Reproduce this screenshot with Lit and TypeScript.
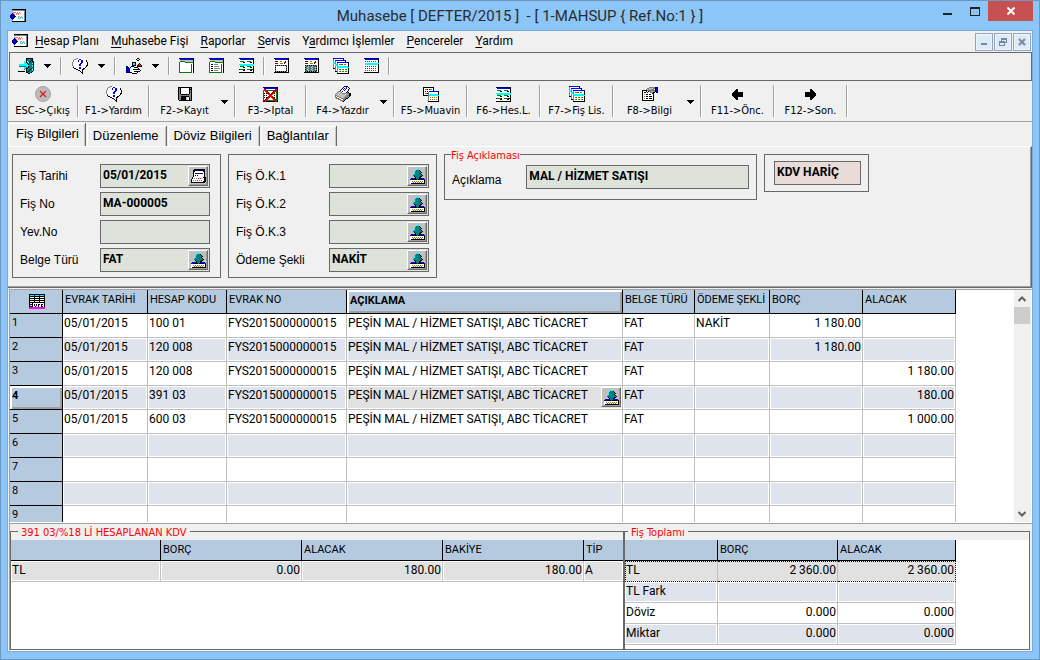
import { LitElement, html, svg, css, nothing } from "lit";
import { customElement, property } from "lit/decorators.js";
import { classMap } from "lit/directives/class-map.js";

/* Pixel icons: one character per pixel, looked up in this palette. */
const PALETTE: Record<string, string> = {
  k: "#000000", w: "#ffffff", b: "#0000ff", n: "#000080", c: "#00ffff",
  t: "#008080", g: "#808080", s: "#c0c0c0", r: "#ff0000", d: "#800000",
  G: "#008000", y: "#ffff00", o: "#808000", m: "#ff00ff", a: "#5fd0c8", p: "#ff7070",
};

const ICONS: Record<string, string[]> = {
  app: [
    "..kkkkkkkkkkkkkk",
    "..gggggggggggggk",
    "..swwwwwwwwwwwgk",
    "..spppwpwpwwwwgk",
    "..npwwpppwpwwwgk",
    ".nnnpwpwpwwwwwgk",
    "nnbnnwwwwwwwwwgk",
    "nbbbnnwwaawawwgk",
    "nnbnnwwwawaaawgk",
    ".nnnwwwwaaawawgk",
    "..nwwwwwwwwwwwgk",
    "..swwwwwwwwwwwgk",
    "..kkkkkkkkkkkkkk",
  ],
  exit: [
    "........kkkkkkk.",
    "........ktttttk.",
    "........kttttkk.",
    "......c.kwttktkk",
    "......ccktwktttk",
    "......ccckttttck",
    ".ccccccccckttttk",
    ".cccccccccctttck",
    ".tttttttccktttck",
    "......ccttkttttk",
    "......ctkktttkck",
    "......t.ktttktck",
    "........kttkttck",
    "kkkkkkk.ktktttk.",
    "........kktttk..",
    "..........kk....",
  ],
  help: [
    "....ggwwwwww....",
    "..ggwwwbbwwwww..",
    ".gwwwwbwwbbwwwk.",
    ".gwwwwbwwbbwwwk.",
    "gwwwwwwwwbbwwwwk",
    "gwwwwwwwbbwwwwwk",
    "gwwwwwwbbwwwwwwk",
    "gwwwwwwbbwwwwwkk",
    ".gwwwwwwwwwwwwk.",
    ".kwwwwwbbwwwwk..",
    "..kkwwwbbwwkk...",
    "....kkwwwwkk....",
    "......kkwwk.....",
    "........kwk.....",
    ".........kk.....",
    "..........k.....",
  ],
  hand: [
    "...........kk...",
    "..........kyyk..",
    "...........kk...",
    "................",
    "......kkkk......",
    "......kcck...k..",
    "......kcck..krk.",
    "......kkkk.krrrk",
    "nn...kkk...kkkkk",
    "nbn.kwwwkkkk....",
    "nnbkwwwwwwwwk...",
    "nnbkwwwkkkkkkk..",
    "nnbkwwwwwwwwwwk.",
    "nnbkwwwwkkkkkk..",
    "nnnkkkwwwwwk....",
    "......kkkkk.....",
  ],
  window: [
    ".nnnnnnnnnnnnnnk",
    "..bbbbbbbbbbbbbk",
    "..sssssssssssssk",
    "..GGGGGssssssssk",
    ".GwwwwwGGGGGGGGk",
    ".Gwwwwwwwwwwwwwk",
    ".GwwwwwwwwwwwGwk",
    ".GwwwwwwwwwwwGwk",
    ".GwwwwwwwwwwwGwk",
    ".GwwwwwwwwwwwGwk",
    ".GwwwwwwwwwwwGwk",
    ".GwwwwwwwwwwwGwk",
    ".GwwwwwwwwwwwGwk",
    ".GwwwwwwwwwwwGwk",
    ".GGGGGGGGGGGGGwk",
  ],
  list: [
    ".nnnnnnnnnnnnnnk",
    "..bbbbbbbbbbbbbk",
    "..sssssssssssssk",
    "..GGGGGssssssssk",
    ".GwwwwwGGGGGGGGk",
    ".Gwwwwwwwwwwwwwk",
    ".GwkkwggggwwwGwk",
    ".GwwwwwwwwwwwGwk",
    ".GwkkwgggggwwGwk",
    ".GwwwwwwwwwwwGwk",
    ".GwkkwggggggwGwk",
    ".GwwwwwwwwwwwGwk",
    ".GwkkwggggwwwGwk",
    ".GwwwwwwwwwwwGwk",
    ".GGGGGGGGGGGGGwk",
  ],
  cells: [
    "nnnnnnnnnnnnnnk",
    "wbbbbbbbbbbbbbk",
    "wwwwwwwwwwwwwwk",
    "wGGGGwwwGGGGwwk",
    "wwwwkkwwwwwkkwk",
    "wwwwwwwwwwwwwwk",
    "ccccccccccccccc",
    "wcccccccccccccc",
    "wGGGGwwwGGGGwwk",
    "wwwwkkwwwwwkkwk",
    "wwwwwwwwwwwwwwk",
    "kGGGGkwwGGGGkkk",
    "wwwwkkwwwwwkkwk",
    "wwwwwwwwwwwwwwk",
    "kkkkkkkkkkkkkkk",
  ],
  form: [
    "nnnnnnnnnnnnnnk",
    "wbbbbbbbbbbbbbk",
    "wwwwwwwwwwwwwwk",
    "wdddwwoowwwdwwk",
    "wwwwwwwwwwddwwk",
    "wdddwwooowdwwwk",
    "wwwwwwwwwwwwwwk",
    "wkgkgkgkgkgkgwk",
    "wgwwwwwwwwwwkwk",
    "wkwwwwwwwwwwgwk",
    "wgwwwwwwwwwwkwk",
    "wkwwwwwwwwwwgwk",
    "wgwwwwwwwwwwkwk",
    "wkgkgkgkgkgkgwk",
    "kkkkkkkkkkkkkkk",
  ],
  formGrid: [
    "nnnnnnnnnnnnnnk",
    "wbbbbbbbbbbbbbk",
    "wwwwwwwwwwwwwwk",
    "wdddwwoowwwdwwk",
    "wwwwwwwwwwddwwk",
    "wdddwwooowdwwwk",
    "wwwwwwwwwwwwwwk",
    "wkgkgkgkgkgkgwk",
    "wgtgsgtgsgtgkwk",
    "wkgsgtgsgtgsgwk",
    "wgtgsgtgsgtgkwk",
    "wkgsgtgsgtgsgwk",
    "wgtgsgtgsgtgkwk",
    "wkgkgkgkgkgkgwk",
    "kkkkkkkkkkkkkkk",
  ],
  stack: [
    "nbbbbbbbbbk.....",
    "gwwwwwwwwwk.....",
    "gwbbbbbbbbbbk...",
    "gwgwwwwwwwwwk...",
    "ccgwnbbbbbbbbbbk",
    "ccgwgwwwwwwwwwwk",
    "gwccgwooGGwoowwk",
    "gwccgwwwwwwwwwwk",
    "gwgwccccccccccck",
    "gwgwgccccccccccc",
    "kkgwgwwwwwwwwwwk",
    "..gwgwoGwoGwoGwk",
    "..gwgwwwwwwwwwwk",
    "..kkgwoGwoGwoGwk",
    "....gwwwwwwwwwwk",
    "....kkkkkkkkkkkk",
  ],
  calendar: [
    "nnnnnnnnnnnnnnk",
    "wbbbbbbbbbbbbbk",
    "wwwwwwwwwwwwwwk",
    "wGwGwGwGwGwGwwk",
    "wwwwwwwwwwwwwwk",
    "wcccccccccccccc",
    "wccccccccccccck",
    "wwwwwwwwwwwwwwk",
    "wGwGwGwGwGwGwwk",
    "wwwwwwwwwwwwwwk",
    "wGwGwGwGwGwGwwk",
    "wwwwwwwwwwwwwwk",
    "wGwGwGwGwGwGwwk",
    "wwwwwwwwwwwwwwk",
    "kkkkkkkkkkkkkkk",
  ],
  save: [
    "kkkkkkkkkkkkkk",
    "kgkwwwwwwwwkgk",
    "kgkwwwwwwwwkkk",
    "kgkwwwwwwwwkgk",
    "kgkwwwwwwwwkgk",
    "kgkwwwwwwwwkgk",
    "kgkwwwwwwwwkgk",
    "kggkkkkkkkkggk",
    "kggggggggggggk",
    "kggkkkkkkkkggk",
    "kggkkkkkswwkgk",
    "kggkkkkkswwkgk",
    "kggkkkkkswwkgk",
    ".kkkkkkkkkkkkk",
  ],
  cancel: [
    "nnnnnnnnnnnnnnk",
    "wbbbbbbbbbbbbbk",
    "wrdwwwwwwwwwdrk",
    "GrrdGGGGGGGdrrk",
    "GwrrdwwwwwdrrGk",
    "GwwrrdwwwdrrwGk",
    "GkwkrrdwdrrkwGk",
    "GwwwwrrdrrwwwGk",
    "GkwkwwrrrwwkwGk",
    "GwwwwdrrrdwwwGk",
    "GkwkdrrwrrdkwGk",
    "GwwdrrwwwrrdwGk",
    "GwdrrwwwwwrrdGk",
    "GdrrGGGGGGGrrGk",
    "kdrkkkkkkkkkrdk",
  ],
  print: [
    ".........kkkk...",
    "........kwwbwk..",
    ".......kwbwbwwk.",
    "......kwbwbwwk..",
    ".....kwwwbwwwk..",
    "...gggwbwwwwk...",
    "..gsssgwwwwkgk..",
    ".gsssssggggsggkk",
    "gsssssssssssggkk",
    "ggsssssssssgggkk",
    "gwggssssssggggk.",
    "gGwwggsssggggk..",
    ".ggrwwgggggkk...",
    "...gggwwggk.....",
    ".....ggggk......",
    ".......gk.......",
  ],
  linked: [
    "kkkkkkkkkkk.....",
    "kwwwwwwwwwk.....",
    "kwookwkoowk.....",
    "kwwwwwwwwwk.....",
    "kwkwkwnbbbbbbbbk",
    "kwwwwgwwwwwwwwwk",
    "kwookgwwwwwwwwwk",
    "kwwwwgccccccccck",
    "kkkkkgcccccccccc",
    ".....gwwwwwwwwwk",
    ".....gwowowowowk",
    ".....gwwwwwwwwwk",
    ".....gwowowowowk",
    ".....gwwwwwwwwwk",
    ".....kkkkkkkkkkk",
  ],
  props: [
    ".......ggggggknn",
    ".....ggssssggkbn",
    "....gsgsggggskbn",
    "kkkkkggggggggkbn",
    "kwwwkwkgggsggkbn",
    "kwkkwkwwgggkk.kn",
    "kwwwwwwwwwkk....",
    "kwgwkkwkkwwk....",
    "kwwwwwwwwwwk....",
    "kwgwkkwkkkwk....",
    "kwwwwwwwwwwk....",
    "kwgwkkwkkkwk....",
    "kwwwwwwwwwwk....",
    "kkkkkkkkkkkk....",
  ],
  prev: [
    "....kk.....",
    "...kkk.....",
    "..kkkk.....",
    ".kkkkkkkkkk",
    "kkkkkkkkkkk",
    "kkkkkkkkkkk",
    "kkkkkkkkkkk",
    ".kkkkkkkkkk",
    "..kkkk.....",
    "...kkk.....",
    "....kk.....",
  ],
  next: [
    ".....kk....",
    ".....kkk...",
    ".....kkkk..",
    "kkkkkkkkkk.",
    "kkkkkkkkkkk",
    "kkkkkkkkkkk",
    "kkkkkkkkkkk",
    "kkkkkkkkkk.",
    ".....kkkk..",
    ".....kkk...",
    ".....kk....",
  ],
  lookup: [
    "sssssscccssssss",
    "sssssctttksssss",
    "ssssstttttkssss",
    "sssscttttttksss",
    "ssssctttttkssss",
    "sssctttttttksss",
    "ssstttttttttkss",
    "ssssktttttkksss",
    "sssssktttkkssss",
    "sbbbbktttkbbbbs",
    "bbkkkkktkkkkkbk",
    "wwwwwwwwwwwwwwk",
    "wwowowowowowowk",
    "wwwowowowowowwk",
    "wkkkkkkkkkkkkkk",
  ],
  date: [
    "...kkkkkkkkkkk.",
    "..kkkkkkkkkkkk.",
    "..kkwwwwwwwwkk.",
    "..kwwwwwwwwwwk.",
    "..kwnnnnnnnnwk.",
    "..kwwwwwwwwwwk.",
    "..kwkwkwwwwwwk.",
    "..kwwwwwwwwwwk.",
    ".kwwwwwwwwwwkkk",
    ".kwgwgwrwrwwwkk",
    "kwwwwwwwwwwwwkk",
    "kwgwgwrwgwrwwkk",
    "kwwwwwwwwwwwkkk",
    "kkkkkkkkkkkkkk.",
  ],
  corner: [
    "kkkkkkkkkkkkkkkk",
    "kccccbccccbcccck",
    "kkkkkkkkkkkkkkkk",
    "kwwwwkwwwwkwwwwk",
    "kkkkkkkkkkkkkkkk",
    "kwwwwkwwwwkwwwwk",
    "kkkkkkkkkkkkkkkk",
    "kwwwwkwwwwkwwwwk",
    "kkkkkkkkkkkkkkkk",
    "kwwkwwwwwwwwwwwk",
    "kkkkwkwkwkkwkkwk",
    "kwwkwkwkwkwwkwwk",
    "kkkkwwkwwkwwkkwk",
    "mmmmmmmmmmmmmmmm",
    "mmmmmmmmmmmmmmmm",
  ],
};

@customElement("pixel-icon")
class PixelIcon extends LitElement {
  static styles = css`
    :host { display: block; line-height: 0; }
    svg { display: block; shape-rendering: crispEdges; }
  `;
  @property() name = "";

  render() {
    const rows = ICONS[this.name] ?? [];
    const w = Math.max(0, ...rows.map((r) => r.length));
    const runs: unknown[] = [];
    rows.forEach((row, y) => {
      for (let x = 0; x < row.length; ) {
        let end = x + 1;
        while (end < row.length && row[end] === row[x]) end++;
        if (row[x] !== ".") {
          runs.push(svg`<rect x=${x} y=${y} width=${end - x} height="1" fill=${PALETTE[row[x]]}></rect>`);
        }
        x = end;
      }
    });
    return html`<svg width=${w} height=${rows.length} viewBox="0 0 ${w} ${rows.length}" aria-hidden="true">${runs}</svg>`;
  }
}

const icon = (name: string) => html`<pixel-icon name=${name}></pixel-icon>`;
const arrow = html`<svg width="7" height="4" viewBox="0 0 7 4" aria-hidden="true"><path d="M0 0h7v1h-1v1h-1v1h-1v1h-1v-1h-1v-1h-1v-1h-1z"></path></svg>`;

/* [before, access key, after] */
const MENU: [string, string, string][] = [
  ["", "H", "esap Planı"], ["", "M", "uhasebe Fişi"], ["", "R", "aporlar"], ["", "S", "ervis"],
  ["Y", "a", "rdımcı İşlemler"], ["", "P", "encereler"], ["", "Y", "ardım"],
];

const COMMANDS: { icon: string; label: string; more?: boolean; narrow?: boolean }[] = [
  { icon: "stop", label: "ESC->Çıkış", narrow: true },
  { icon: "help", label: "F1->Yardım", narrow: true },
  { icon: "save", label: "F2->Kayıt", more: true, narrow: true },
  { icon: "cancel", label: "F3->Iptal", narrow: true },
  { icon: "print", label: "F4->Yazdır", more: true },
  { icon: "linked", label: "F5->Muavin" },
  { icon: "cells", label: "F6->Hes.L." },
  { icon: "stack", label: "F7->Fiş Lis." },
  { icon: "props", label: "F8->Bilgi", more: true },
  { icon: "prev", label: "F11->Önc." },
  { icon: "next", label: "F12->Son." },
];

const TABS = ["Fiş Bilgileri", "Düzenleme", "Döviz Bilgileri", "Bağlantılar"];

const COLUMNS = ["EVRAK TARİHİ", "HESAP KODU", "EVRAK NO", "AÇIKLAMA", "BELGE TÜRÜ", "ÖDEME ŞEKLİ", "BORÇ", "ALACAK"];
const NOTE = "PEŞİN MAL / HİZMET SATIŞI, ABC TİCACRET";
const line = (account: string, pay: string, debit: string, credit: string) =>
  ["05/01/2015", account, "FYS2015000000015", NOTE, "FAT", pay, debit, credit];
const LINES: string[][] = [
  line("100 01", "NAKİT", "1 180.00", ""),
  line("120 008", "", "1 180.00", ""),
  line("120 008", "", "", "1 180.00"),
  line("391 03", "", "", "180.00"),
  line("600 03", "", "", "1 000.00"),
  ...Array.from({ length: 4 }, () => Array(8).fill("")),
];
const CURRENT = 3;

const TOTALS = [
  ["TL", "2 360.00", "2 360.00"],
  ["TL Fark", "", ""],
  ["Döviz", "0.000", "0.000"],
  ["Miktar", "0.000", "0.000"],
];

@customElement("app-root")
class AppRoot extends LitElement {
  static styles = css`
    :host {
      display: block;
      color: #000;
      font: 12px/14px "Liberation Sans", Arial, sans-serif;
      --face: #f0f0f0;
      --dark: #696969;
      --mid: #a0a0a0;
      --head: #b5cade;
      --stripe: #dfe3ec;
      --field: #dde3da;
      --tahoma: "DejaVu Sans Condensed", "DejaVu Sans", sans-serif;
      --cell: Roboto, "Liberation Sans", sans-serif;
    }
    * { box-sizing: border-box; }
    button, input { font: inherit; color: inherit; margin: 0; padding: 0; border: 0; border-radius: 0; background: none; }
    button { cursor: default; }

    .window {
      display: flex; flex-direction: column; height: 100vh; min-height: 560px;
      padding: 0 6px 7px; border: 1px solid #6b98c1; background: #8cc6f9;
    }
    .title {
      flex: none; display: grid; grid-template-columns: 1fr auto 1fr; align-items: center; height: 29px;
      color: #2b2b2b;
    }
    .title pixel-icon { padding-left: 3px; }
    .title h1 { margin: 0; font: 15px/20px Roboto, "Open Sans", sans-serif; white-space: pre; }
    .caption { display: flex; justify-content: flex-end; align-self: start; }
    .caption button { display: grid; place-items: center; width: 27px; height: 20px; }
    .caption .close { width: 45px; background: #c75050; }
    .client {
      flex: 1; min-height: 0; display: flex; flex-direction: column;
      border: 1px solid #79a9d5; background: var(--face);
    }

    .menu { flex: none; display: flex; align-items: center; height: 21px; padding: 0 1px 0 4px; }
    .menu pixel-icon { padding-bottom: 2px; }
    .menu nav { display: flex; gap: 12px; margin-left: 7px; padding-bottom: 2px; }
    .menu a { color: inherit; text-decoration: none; font: 12px/18px Roboto, "Open Sans", sans-serif; white-space: nowrap; }
    .menu u { text-underline-offset: 2px; }
    .mdi { display: flex; gap: 1px; margin-left: auto; }
    .mdi button {
      display: grid; place-items: center; width: 18px; height: 18px;
      border: 1px solid #95a4b8; background: #dcebfa; box-shadow: inset 0 0 0 1px #eef6fd;
    }

    .tools {
      flex: none; display: flex; align-items: center; height: 29px; margin-left: 1px; padding: 0 0 2px 7px;
      border: 1px solid var(--dark);
    }
    .tools button { display: grid; place-items: center; width: 30px; height: 22px; }
    .tools .lead { width: 18px; }
    .tools .drop { width: 25px; }
    .sep { flex: none; width: 2px; height: 18px; border-left: 1px solid var(--mid); border-right: 1px solid #fff; }
    .tools .sep { margin-right: 9px; }
    .tools .tight { margin-right: 1px; }
    .tools button:not(.drop) + .sep { margin-left: 2px; }

    .commands { flex: none; display: flex; align-items: center; height: 41px; border-bottom: 1px solid var(--mid); }
    .commands .run { display: flex; flex-direction: column; align-items: center; width: 71px; height: 36px; gap: 1px; padding-top: 2px; }
    .commands .run.narrow { width: 69px; }
    .commands .glyph { display: grid; place-items: center; height: 18px; }
    .commands .run span:last-child { font: 11px/14px var(--tahoma); white-space: nowrap; }
    .commands .drop { width: 15px; height: 34px; padding: 0 4px 3px 0; }
    .commands .sep { height: 32px; }

    .tabs { flex: none; display: flex; align-items: flex-end; height: 24px; }
    .tabs button {
      height: 20px; padding: 0 7px 0 6px; font-size: 13px; line-height: 18px;
      border-right: 1px solid var(--dark); box-shadow: inset 1px 1px #fff, inset -1px 0 #c8c8c8;
    }
    .tabs button + button { margin-left: 1px; }
    .tabs .active { height: 23px; padding: 0 6px 2px 8px; }

    .sheet {
      flex: none; display: flex; align-items: flex-start; gap: 7px; height: 142px; padding: 7px 4px 0;
      border-top: 1px solid #fff; border-right: 1px solid var(--dark); border-bottom: 1px solid var(--dark);
      box-shadow: inset -1px -1px var(--mid);
    }
    .box { margin: 0; min-width: 0; border: 1px solid var(--dark); padding: 9px 10px 5px 7px; }
    .fields { display: grid; grid-template-columns: auto 1fr; align-items: center; row-gap: 4px; width: 209px; }
    .fields.second { padding-right: 7px; }
    .field { display: flex; justify-self: end; width: 110px; height: 24px; padding: 1px; border: 1px solid var(--dark); background: var(--field); }
    .second .field { width: 100px; }
    .field input { flex: 1; min-width: 0; padding: 0 0 2px 1px; font: bold 12px/18px var(--cell); }
    .key {
      flex: none; display: grid; place-items: center; width: 20px; height: 20px; background: #c0c0c0;
      border: 1px solid; border-color: #fff var(--dark) var(--dark) #fff; box-shadow: inset -1px -1px var(--mid);
    }
    legend { color: #f00; font: 11px/13px var(--tahoma); padding: 2px 0 0; }
    .note { display: flex; align-items: flex-end; gap: 25px; width: 313px; margin-top: -7px; padding: 3px 7px 10px; }
    .note legend { margin-left: -1px; }
    .note label { line-height: 18px; }
    .note .field { flex: 1; }
    .tax { padding: 6px 7px 6px 9px; }
    .tax .field { width: 87px; background: #e8dbd8; }

    .grid {
      flex: 1; min-height: 0; display: flex; margin: 1px 0 0 1px; background: #fff;
      border: 1px solid; border-color: var(--mid) #fff #fff var(--mid);
    }
    .rows { flex: 1; min-width: 0; overflow: hidden; }
    table { border-collapse: separate; border-spacing: 0; table-layout: fixed; font: 12px/18px var(--cell); }
    th, td { padding: 0 1px; text-align: left; vertical-align: top; white-space: nowrap; overflow: hidden; font-weight: normal; }
    th { background: var(--head); border: 0 solid #000; border-width: 0 1px 1px 0; padding-left: 2px; font-size: 11px; }
    td { border: 0 solid #c0c0c0; border-width: 0 1px 1px 0; height: 24px; }
    tr.even td { background: var(--stripe); box-shadow: inset 0 0 0 1px #fff; }
    .num { text-align: right; }
    .journal { width: 946px; }
    .journal thead th { height: 24px; line-height: 19px; }
    .journal thead .raised { line-height: 21px; padding-left: 3px; }
    .raised { font-weight: bold; box-shadow: inset 2px 2px #fff, inset -2px -2px var(--mid); }
    tbody .raised { padding-top: 1px; }
    .corner pixel-icon { display: grid; justify-content: center; padding-top: 4px; }
    .journal tr td.current { background: #e1e1e1; }
    .current div { display: flex; justify-content: space-between; align-items: flex-start; }
    .current .key { margin-top: 1px; }
    .w0 { width: 53px; } .w1 { width: 85px; } .w2 { width: 79px; } .w3 { width: 120px; } .w4 { width: 276px; }
    .w5 { width: 72px; } .w6 { width: 75px; } .w7, .w8 { width: 93px; }

    .scroll { flex: none; display: flex; flex-direction: column; align-items: center; width: 17px; padding-right: 1px; background: var(--face); }
    .scroll button { display: grid; place-items: center; flex: none; width: 16px; height: 17px; }
    .scroll .thumb { background: #cdcdcd; }
    .scroll .down { margin-top: auto; }

    .bottom {
      flex: none; display: grid; grid-template-columns: 614px 1fr; height: 128px; margin-left: 1px; padding: 0 2px 1px 0;
      border: 0 solid var(--mid); border-width: 1px 0 1px 1px; border-bottom-color: #fff;
    }
    .bottom fieldset { display: flex; flex-direction: column; min-width: 0; margin: 0; padding: 1px 0 0; border: 1px solid var(--dark); }
    .bottom legend { margin-left: 7px; padding: 2px 3px 0; }
    .bottom .right legend { margin-left: 3px; }
    .well { height: 109px; background: #fff; overflow: hidden; }
    .bottom th { height: 21px; line-height: 19px; }
    .bottom td { height: 21px; }
    .bottom tr.sel td { background: #e1e1e1; box-shadow: inset 0 0 0 1px #fff; }
    .account { width: 100%; }
    .account th:last-child, .account td:last-child { border-right: 0; }
    .a0 { width: 150px; } .a1 { width: 141px; }
    .totals { width: 331px; }
    .t0 { width: 93px; } .t1 { width: 120px; }
    .totals tr.sel td { box-shadow: none; border-bottom: 1px dotted #400; border-top: 1px dotted #400; line-height: 17px; }
    .totals tr.sel td:first-child { border-left: 1px dotted #400; padding-left: 0; }
    .totals tr.sel td:last-child { border-right: 1px dotted #400; }
  `;

  private stop() {
    return html`<svg width="16" height="16" viewBox="0 0 16 16" aria-hidden="true">
      <circle cx="8" cy="8" r="7.5" fill="#bcbcbc" stroke="#a4a4a4"></circle>
      <path d="M5 5l6 6M11 5l-6 6" stroke="#e01818" stroke-width="1.3" fill="none"></path></svg>`;
  }

  private key(name: string, label: string) {
    return html`<button class="key" aria-label=${label}>${icon(name)}</button>`;
  }

  private field(id: string, label: string, value: string, key = "") {
    return html`<label for=${id}>${label}</label>
      <div class="field"><input id=${id} .value=${value} autocomplete="off">${key ? this.key(key, `${label} seç`) : nothing}</div>`;
  }

  private toolbar() {
    const tool = (name: string) => html`<button aria-label=${name}>${icon(name)}</button>`;
    const split = (name: string) => html`<button class="lead" aria-label=${name}>${icon(name)}</button>
      <button class="drop" aria-label="${name} seçenekleri">${arrow}</button>`;
    return html`<div class="tools" role="toolbar">
      ${split("exit")}<i class="sep"></i>
      ${split("help")}<i class="sep"></i>
      ${split("hand")}<i class="sep tight"></i>
      ${["window", "list", "cells"].map(tool)}<i class="sep tight"></i>
      ${["form", "formGrid", "stack", "calendar"].map(tool)}<i class="sep"></i>
    </div>`;
  }

  render() {
    return html`<div class="window">
      <header class="title">
        ${icon("app")}
        <h1>Muhasebe [ DEFTER/2015 ]  - [ 1-MAHSUP { Ref.No:1 } ]</h1>
        <div class="caption">
          <button aria-label="Simge durumuna küçült"><svg width="9" height="12"><path d="M0 8h9v2H0z" fill="#222"></path></svg></button>
          <button aria-label="Ekranı kapla"><svg width="10" height="9"><path d="M0 0h10v9H0zM1 2v6h8V2z" fill="#222" fill-rule="evenodd"></path></svg></button>
          <button class="close" aria-label="Kapat"><svg width="8" height="8"><path d="M.5 .5l7 7M7.5 .5l-7 7" stroke="#fff" stroke-width="2"></path></svg></button>
        </div>
      </header>
      <main class="client">
        <div class="menu">
          ${icon("app")}
          <nav>${MENU.map(([a, k, z]) => html`<a href="#">${a}<u>${k}</u>${z}</a>`)}</nav>
          <div class="mdi">
            <button aria-label="Küçült"><svg width="8" height="8"><path d="M1 5h6v2H1z" fill="#7a8799"></path></svg></button>
            <button aria-label="Geri yükle"><svg width="8" height="8"><path d="M2 0h6v5H6V4h1V2H3v1H2zM0 3h6v5H0zM1 5v2h4V5z" fill="#7a8799" fill-rule="evenodd"></path></svg></button>
            <button aria-label="Kapat"><svg width="8" height="8"><path d="M1 1l6 6M7 1l-6 6" stroke="#7a8799" stroke-width="2"></path></svg></button>
          </div>
        </div>
        ${this.toolbar()}
        <div class="commands" role="toolbar">
          ${COMMANDS.map((c) => html`
            <button class=${classMap({ run: true, narrow: !!c.narrow })}>
              <span class="glyph">${c.icon === "stop" ? this.stop() : icon(c.icon)}</span><span>${c.label}</span>
            </button>${c.more ? html`<button class="drop" aria-label="${c.label} seçenekleri">${arrow}</button>` : nothing}<i class="sep"></i>`)}
        </div>
        <div class="tabs" role="tablist">
          ${TABS.map((t, i) => html`<button role="tab" aria-selected=${i === 0} class=${classMap({ active: i === 0 })}>${t}</button>`)}
        </div>
        <section class="sheet">
          <div class="box fields">
            ${this.field("date", "Fiş Tarihi", "05/01/2015", "date")}
            ${this.field("no", "Fiş No", "MA-000005")}
            ${this.field("yev", "Yev.No", "")}
            ${this.field("doc", "Belge Türü", "FAT", "lookup")}
          </div>
          <div class="box fields second">
            ${this.field("ok1", "Fiş Ö.K.1", "", "lookup")}
            ${this.field("ok2", "Fiş Ö.K.2", "", "lookup")}
            ${this.field("ok3", "Fiş Ö.K.3", "", "lookup")}
            ${this.field("pay", "Ödeme Şekli", "NAKİT", "lookup")}
          </div>
          <fieldset class="box note"><legend>Fiş Açıklaması</legend>${this.field("text", "Açıklama", "MAL / HİZMET SATIŞI")}</fieldset>
          <div class="box tax"><div class="field"><input aria-label="KDV" .value=${"KDV HARİÇ"}></div></div>
        </section>
        <section class="grid">
          <div class="rows">
            <table class="journal">
              <colgroup>${[0, 1, 2, 3, 4, 5, 6, 7, 8].map((i) => html`<col class="w${i}">`)}</colgroup>
              <thead><tr><th class="corner">${icon("corner")}</th>${COLUMNS.map((c, i) => html`<th class=${classMap({ raised: i === 3 })}>${c}</th>`)}</tr></thead>
              <tbody>${LINES.map((r, n) => html`<tr class=${classMap({ even: n % 2 === 1 })}>
                <th class=${classMap({ raised: n === CURRENT })}>${n + 1}</th>
                ${r.map((v, i) => n === CURRENT && i === 3
                  ? html`<td class="current"><div>${v}${this.key("lookup", "Açıklama seç")}</div></td>`
                  : html`<td class=${classMap({ num: i > 5 })}>${v}</td>`)}
              </tr>`)}</tbody>
            </table>
          </div>
          <div class="scroll">
            <button aria-label="Yukarı"><svg width="8" height="6"><path d="M.5 5L4 1.500 7.500 5" fill="none" stroke="#606060" stroke-width="2"></path></svg></button>
            <button class="thumb" aria-label="Kaydır"></button>
            <button class="down" aria-label="Aşağı"><svg width="8" height="6"><path d="M.5 1L4 4.500 7.500 1" fill="none" stroke="#606060" stroke-width="2"></path></svg></button>
          </div>
        </section>
        <section class="bottom">
          <fieldset>
            <legend>391 03/%18 Lİ HESAPLANAN KDV</legend>
            <div class="well"><table class="account">
              <colgroup><col class="a0"><col class="a1"><col class="a1"><col class="a1"><col></colgroup>
              <thead><tr><th></th><th>BORÇ</th><th>ALACAK</th><th>BAKİYE</th><th>TİP</th></tr></thead>
              <tbody><tr class="sel"><td>TL</td><td class="num">0.00</td><td class="num">180.00</td><td class="num">180.00</td><td>A</td></tr></tbody>
            </table></div>
          </fieldset>
          <fieldset class="right">
            <legend>Fiş Toplamı</legend>
            <div class="well"><table class="totals">
              <colgroup><col class="t0"><col class="t1"><col></colgroup>
              <thead><tr><th></th><th>BORÇ</th><th>ALACAK</th></tr></thead>
              <tbody>${TOTALS.map((r, n) => html`<tr class=${classMap({ sel: n === 0, even: n % 2 === 1 })}>
                ${r.map((v, i) => html`<td class=${classMap({ num: i > 0 })}>${v}</td>`)}</tr>`)}</tbody>
            </table></div>
          </fieldset>
        </section>
      </main>
    </div>`;
  }
}
